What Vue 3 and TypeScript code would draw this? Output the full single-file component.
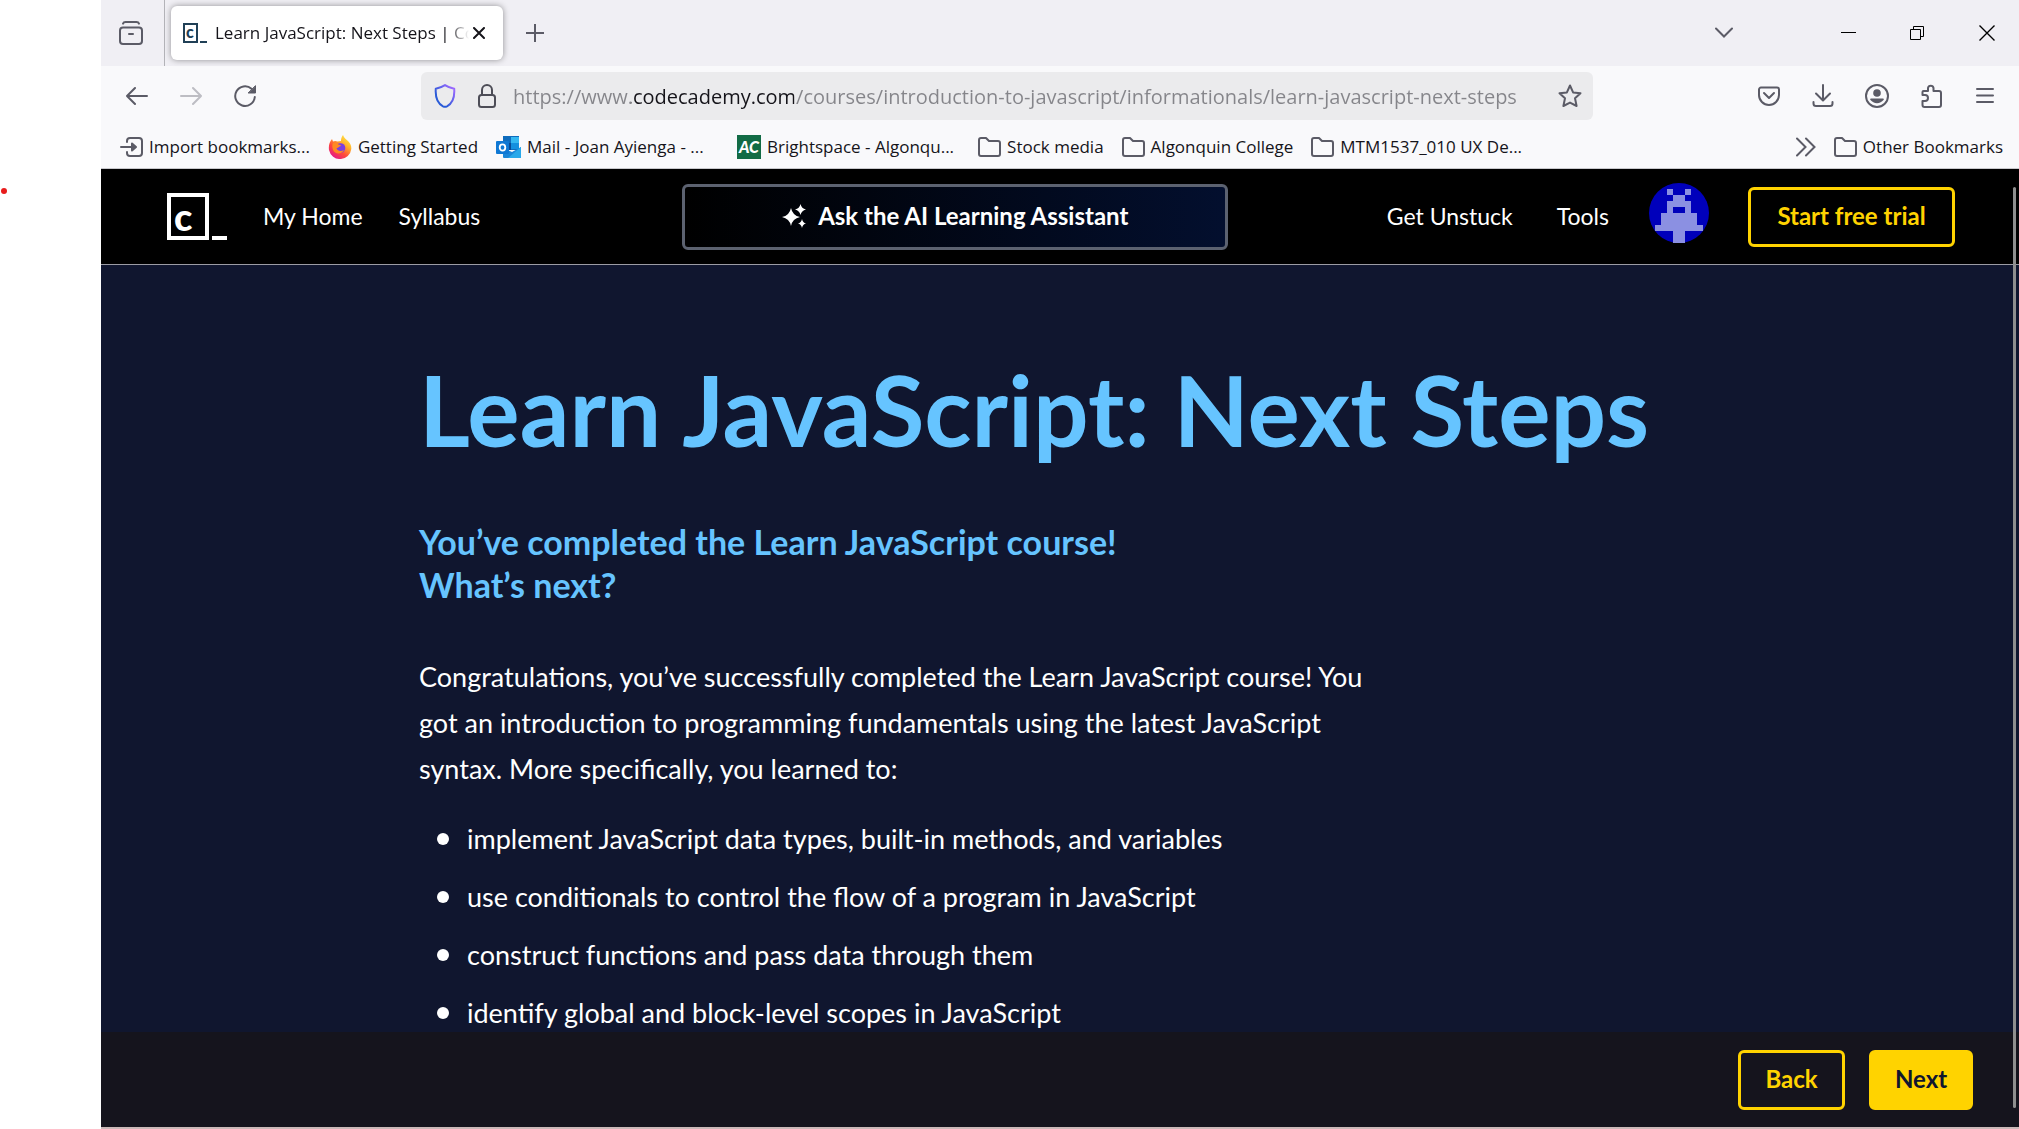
<script setup lang="ts">
import { ref } from 'vue'

interface Bookmark {
  label: string
  icon: 'import' | 'firefox' | 'outlook' | 'college' | 'folder'
  wide?: boolean
}

const address = ref('https://www.codecademy.com/courses/introduction-to-javascript/informationals/learn-javascript-next-steps')

const bookmarks: Bookmark[] = [
  { label: 'Import bookmarks...', icon: 'import' },
  { label: 'Getting Started', icon: 'firefox' },
  { label: 'Mail - Joan Ayienga - ...', icon: 'outlook', wide: true },
  { label: 'Brightspace - Algonqu...', icon: 'college', wide: true },
  { label: 'Stock media', icon: 'folder' },
  { label: 'Algonquin College', icon: 'folder' },
  { label: 'MTM1537_010 UX De...', icon: 'folder', wide: true },
]

const skills: string[] = [
  'implement JavaScript data types, built-in methods, and variables',
  'use conditionals to control the flow of a program in JavaScript',
  'construct functions and pass data through them',
  'identify global and block-level scopes in JavaScript',
]
</script>

<template>
  <div class="screen">
    <span class="marker"></span>
    <div class="browser">
      <div class="tabs">
        <button class="recent" aria-label="Recent browsing">
          <svg width="24" height="24" viewBox="0 0 24 24" fill="none" stroke="#5b5b66" stroke-width="2" stroke-linecap="round">
            <path d="M4 2.6C4.5 1.3 5.5 1 6.500 1h11c1 0 2 .3 2.500 1.600" />
            <rect x="1" y="6.500" width="22" height="16.500" rx="3" />
            <path d="M10 13h4" />
          </svg>
        </button>
        <div class="tab">
          <svg class="favicon" width="24" height="20" viewBox="0 0 24 20">
            <rect x="1" y="1" width="13" height="18" fill="none" stroke="#204056" stroke-width="2" />
            <rect x="17" y="18" width="7" height="2" fill="#204056" />
            <text x="3" y="15" font-family="Lato, sans-serif" font-weight="900" font-size="16" fill="#204056">c</text>
          </svg>
          <span class="tab-title">Learn JavaScript: Next Steps | Co</span>
          <button class="tab-close" aria-label="Close tab">
            <svg width="12" height="12" viewBox="0 0 12 12" stroke="#15141a" stroke-width="2" stroke-linecap="round"><path d="M1 1l10 10M11 1L1 11" /></svg>
          </button>
        </div>
        <button class="new-tab" aria-label="New tab">
          <svg width="18" height="18" viewBox="0 0 18 18" stroke="#5b5b66" stroke-width="2"><path d="M9 0v18M0 9h18" /></svg>
        </button>
        <div class="window-controls">
          <button class="all-tabs" aria-label="List all tabs">
            <svg width="18" height="12" viewBox="0 0 18 12" fill="none" stroke="#5b5b66" stroke-width="2" stroke-linecap="round"><path d="M1 1.500l8 8 8-8" /></svg>
          </button>
          <button aria-label="Minimize">
            <svg width="15" height="15" viewBox="0 0 15 15" fill="#000"><rect y="6" width="15" height="1" /></svg>
          </button>
          <button aria-label="Restore">
            <svg width="15" height="15" viewBox="0 0 15 15" fill="none" stroke="#000"><path d="M.5 3.500h10v10H.5zM3.500 3.500v-3h10v10h-3" /></svg>
          </button>
          <button aria-label="Close window">
            <svg width="16" height="16" viewBox="0 0 16 16" stroke="#000" stroke-width="1.400"><path d="M.5.5l15 15M15.500.5l-15 15" /></svg>
          </button>
        </div>
      </div>

      <div class="toolbar">
        <div class="nav-buttons">
          <button aria-label="Back">
            <svg width="22" height="22" viewBox="0 0 22 22" fill="none" stroke="#5b5b66" stroke-width="2" stroke-linecap="round" stroke-linejoin="round"><path d="M21 11H1M9 3l-8 8 8 8" /></svg>
          </button>
          <button aria-label="Forward" disabled>
            <svg width="22" height="22" viewBox="0 0 22 22" fill="none" stroke="#bdbdc3" stroke-width="2" stroke-linecap="round" stroke-linejoin="round"><path d="M1 11h20M13 3l8 8-8 8" /></svg>
          </button>
          <button aria-label="Reload">
            <svg width="22" height="22" viewBox="0 0 22 22" fill="none" stroke="#5b5b66" stroke-width="2" stroke-linecap="round"><path d="M20.800 12A9.800 9.800 0 1 1 17.500 3.700" /><path d="M21.500 1v7h-7z" fill="#5b5b66" stroke-width="1" stroke-linejoin="round" /></svg>
          </button>
        </div>
        <div class="url-bar">
          <svg width="22" height="24" viewBox="0 0 22 24" fill="none">
            <defs><linearGradient id="shield" x1="0" y1="1" x2="1" y2="0"><stop offset=".3" stop-color="#2a5bd7" /><stop offset=".9" stop-color="#9a68ff" /></linearGradient></defs>
            <path d="M11 1.200c2.500 1.600 5.500 2.900 9.200 3.600.6 8-1.900 14.700-7.200 17.500-1.400.7-2.600.7-4 0C3.700 19.500 1.200 12.800 1.800 4.800 5.500 4.100 8.500 2.800 11 1.200z" stroke="url(#shield)" stroke-width="2" />
          </svg>
          <svg width="18" height="24" viewBox="0 0 18 24" fill="none" stroke="#4d4d57" stroke-width="2"><rect x="1" y="11" width="16" height="12" rx="2.500" /><path d="M4 11V6a5 5 0 0 1 10 0v5" /></svg>
          <input v-model="address" class="address" type="text" aria-label="Address" spellcheck="false" />
          <button aria-label="Bookmark this page">
            <svg width="24" height="24" viewBox="0 0 24 24" fill="none" stroke="#5b5b66" stroke-width="2" stroke-linejoin="round"><path d="M12 1.500l3.100 6.900 7.400.8-5.500 5 1.600 7.800L12 18.600 5.400 22 7 14.200 1.500 9.200l7.400-.8z" /></svg>
          </button>
        </div>
        <div class="tool-buttons">
          <button aria-label="Save to Pocket">
            <svg width="24" height="24" viewBox="0 0 24 24" fill="none" stroke="#5b5b66" stroke-width="2" stroke-linecap="round" stroke-linejoin="round"><path d="M4 3.500h16a2 2 0 0 1 2 2V11a10 10 0 0 1-20 0V5.500a2 2 0 0 1 2-2z" /><path d="M7 9l5 5 5-5" /></svg>
          </button>
          <button aria-label="Downloads">
            <svg width="24" height="24" viewBox="0 0 24 24" fill="none" stroke="#5b5b66" stroke-width="2" stroke-linecap="round" stroke-linejoin="round"><path d="M12 1v15M5 9.500l7 7 7-7M2.500 18v1.500A2.500 2.500 0 0 0 5 22h14a2.500 2.500 0 0 0 2.500-2.500V18" /></svg>
          </button>
          <button aria-label="Account">
            <svg width="24" height="24" viewBox="0 0 24 24"><circle cx="12" cy="12" r="11" fill="none" stroke="#5b5b66" stroke-width="2" /><circle cx="12" cy="9" r="3.800" fill="#5b5b66" /><path d="M6 14.500h12c1 0 1 1 .5 1.600a8.300 8.300 0 0 1-13 0c-.5-.6-.5-1.600.5-1.600z" fill="#5b5b66" /></svg>
          </button>
          <button aria-label="Extensions">
            <svg width="24" height="24" viewBox="0 0 24 24" fill="none" stroke="#5b5b66" stroke-width="2" stroke-linejoin="round"><path d="M4.500 7H9V4a2.800 2.800 0 0 1 5.500 0v3H20a2 2 0 0 1 2 2v12a2 2 0 0 1-2 2H5.500a2 2 0 0 1-2-2v-4H6a3 3 0 0 0 0-6H3.500V8a1 1 0 0 1 1-1z" /></svg>
          </button>
          <button aria-label="Menu">
            <svg width="24" height="24" viewBox="0 0 24 24" stroke="#5b5b66" stroke-width="2" stroke-linecap="round"><path d="M4 5h16M4 11.500h16M4 18h16" /></svg>
          </button>
        </div>
      </div>

      <div class="bookmarks">
        <a v-for="item in bookmarks" :key="item.label" class="bookmark" :class="{ wide: item.wide }" href="#">
          <svg v-if="item.icon === 'import'" width="23" height="20" viewBox="0 0 23 20" fill="none" stroke="#5b5b66" stroke-width="2" stroke-linecap="round" stroke-linejoin="round">
            <path d="M7 5V4a3 3 0 0 1 3-3h9a3 3 0 0 1 3 3v12a3 3 0 0 1-3 3h-9a3 3 0 0 1-3-3v-1" /><path d="M1 10h13" /><path d="M12 6.500l4 3.500-4 3.500z" fill="#5b5b66" />
          </svg>
          <svg v-else-if="item.icon === 'firefox'" width="24" height="24" viewBox="0 0 24 24">
            <defs><linearGradient id="flame" x1=".9" y1="0" x2=".2" y2="1"><stop offset="0" stop-color="#fff44f" /><stop offset=".35" stop-color="#ffb12b" /><stop offset=".65" stop-color="#ff4a3a" /><stop offset="1" stop-color="#e01490" /></linearGradient></defs>
            <path d="M15 0c1 3 3 4 5 6 2.500 2.500 3.500 5 3.300 8A11.300 11.300 0 0 1 1 15C.4 10.500 1.500 7 4 4l1 2.600c1.500-.8 3-.8 4.500 0L13 6c0-2 .5-4 2-6z" fill="url(#flame)" />
            <circle cx="12.500" cy="13" r="4.800" fill="#7a3fe0" />
            <path d="M5 8c2-1 4-.6 5.500 1.500 1.500.3 2.500.8 2.500 1.500-1.500 0-2.500 2-4.500 2.200 1 3 5 3.500 7.500 1.500-2 5-9 5-11 0C4.200 12.500 4 10 5 8z" fill="#ff8a22" />
          </svg>
          <svg v-else-if="item.icon === 'outlook'" width="25" height="22" viewBox="0 0 25 22">
            <rect x="7" y="0" width="16" height="14" fill="#0f6cbd" /><rect x="15" y="1" width="8" height="6" fill="#35b8f1" /><rect x="7" y="7" width="8" height="7" fill="#0a4a94" /><rect x="15" y="7" width="8" height="6" fill="#1490df" />
            <path d="M7 12l9 4 9-5v11H8a1 1 0 0 1-1-1z" fill="#1a86d8" /><path d="M25 11v11H12z" fill="#28a8ea" />
            <rect x="0" y="5" width="13" height="13" rx="1" fill="#0f78d4" /><ellipse cx="6.500" cy="11.500" rx="2.800" ry="3.200" fill="none" stroke="#fff" stroke-width="1.800" />
          </svg>
          <svg v-else-if="item.icon === 'college'" width="24" height="24" viewBox="0 0 24 24">
            <rect width="24" height="24" fill="#126b45" />
            <text x="12" y="18" text-anchor="middle" font-family="Lato, sans-serif" font-weight="900" font-style="italic" font-size="16" fill="#fff">AC</text>
          </svg>
          <svg v-else width="23" height="20" viewBox="0 0 23 20" fill="none" stroke="#5b5b66" stroke-width="2" stroke-linejoin="round"><path d="M1 17V3a2 2 0 0 1 2-2h5l3 3h9a2 2 0 0 1 2 2v11a2 2 0 0 1-2 2H3a2 2 0 0 1-2-2z" /></svg>
          <span>{{ item.label }}</span>
        </a>
        <button class="overflow" aria-label="More bookmarks">
          <svg width="20" height="20" viewBox="0 0 20 20" fill="none" stroke="#5b5b66" stroke-width="2" stroke-linecap="round"><path d="M1 1.500L9.500 10 1 18.500M10 1.500l8.500 8.500-8.500 8.500" /></svg>
        </button>
        <a class="bookmark" href="#">
          <svg width="23" height="20" viewBox="0 0 23 20" fill="none" stroke="#5b5b66" stroke-width="2" stroke-linejoin="round"><path d="M1 17V3a2 2 0 0 1 2-2h5l3 3h9a2 2 0 0 1 2 2v11a2 2 0 0 1-2 2H3a2 2 0 0 1-2-2z" /></svg>
          <span>Other Bookmarks</span>
        </a>
      </div>

      <div class="page">
        <header class="site-header">
          <a class="logo" href="#" aria-label="Codecademy">
            <svg width="60" height="48" viewBox="0 0 60 48">
              <rect x="2" y="2" width="38" height="43" fill="none" stroke="#fff" stroke-width="4" />
              <rect x="45" y="43" width="15" height="4" fill="#fff" />
              <text x="7" y="38" font-family="Lato, sans-serif" font-weight="900" font-size="38" fill="#fff">c</text>
            </svg>
          </a>
          <nav class="main-nav">
            <a href="#">My Home</a>
            <a href="#">Syllabus</a>
          </nav>
          <button class="assistant">
            <svg width="24" height="24" viewBox="0 0 24 24" fill="#fff">
              <path d="M9 4q1.500 7.500 9 9-7.500 1.500-9 9-1.500-7.500-9-9 7.500-1.500 9-9z" /><path d="M18.500 0q1 4.500 5.500 5.500-4.500 1-5.500 5.500-1-4.500-5.500-5.500 4.500-1 5.500-5.500z" /><path d="M20 15q.8 3.700 4 4.500-3.200.8-4 4.500-.8-3.700-4-4.500 3.200-.8 4-4.500z" />
            </svg>
            <span>Ask the AI Learning Assistant</span>
          </button>
          <nav class="side-nav">
            <a href="#">Get Unstuck</a>
            <a href="#">Tools</a>
          </nav>
          <button class="avatar" aria-label="Profile">
            <svg width="60" height="60" viewBox="0 0 10 10">
              <circle cx="5" cy="5" r="5" fill="#0000bb" />
              <path shape-rendering="crispEdges" fill="#8b90e2" d="M3 1h1v1H3zM6 1h1v1H6zM4 2h2v1H4zM3 3h4v2h1v2h1v1H6v2H4V8H1V7h1V5h1zM4 4v1h2V4z" fill-rule="evenodd" />
            </svg>
          </button>
          <button class="trial">Start free trial</button>
        </header>

        <main class="lesson">
          <h1>Learn JavaScript: Next Steps</h1>
          <h2>You’ve completed the Learn JavaScript course!<br />What’s next?</h2>
          <p>
            Congratulations, you’ve successfully completed the Learn JavaScript course! You<br />
            got an introduction to programming fundamentals using the latest JavaScript<br />
            syntax. More specifically, you learned to:
          </p>
          <ul>
            <li v-for="skill in skills" :key="skill">{{ skill }}</li>
          </ul>
        </main>

        <footer class="lesson-nav">
          <button class="back">Back</button>
          <button class="next">Next</button>
        </footer>
        <span class="scrollbar"></span>
      </div>
    </div>
  </div>
</template>

<style>
body {
  margin: 0;
  background: #fff;
}
</style>

<style scoped>
* {
  box-sizing: border-box;
}

.screen {
  position: relative;
  display: flex;
  min-height: 100vh;
  padding-left: 101px;
  font-family: 'Open Sans', 'Noto Sans', sans-serif;
  overflow: hidden;
}

.marker {
  position: absolute;
  left: 1px;
  top: 188px;
  width: 6px;
  height: 6px;
  border-radius: 50%;
  background: #e81c1c;
}

.browser {
  flex: 1;
  min-width: 0;
  display: flex;
  flex-direction: column;
  background: #f9f9fb;
  border-bottom: 2px solid #cbb9b9;
}

button {
  display: flex;
  align-items: center;
  justify-content: center;
  padding: 0;
  border: 0;
  background: none;
  font: inherit;
  cursor: pointer;
}

svg {
  display: block;
  flex: none;
}

a {
  color: inherit;
  text-decoration: none;
}

.tabs {
  display: flex;
  align-items: center;
  height: 66px;
  background: #f0eff4;
}

.recent {
  width: 64px;
  height: 66px;
  padding-right: 4px;
  border-right: 1px solid #b3b3b8;
}

.tab {
  display: flex;
  align-items: center;
  width: 332px;
  height: 54px;
  margin-left: 6px;
  padding: 0 18px 0 12px;
  border-radius: 6px;
  background: #fff;
  box-shadow: 0 0 6px rgba(0, 0, 0, 0.4);
}

.tab-title {
  flex: 1;
  min-width: 0;
  margin-left: 8px;
  white-space: nowrap;
  font-size: 17px;
  line-height: 24px;
  color: #15141a;
  mask-image: linear-gradient(to left, transparent 4px, #000 26px);
}

.new-tab {
  margin-left: 23px;
}

.window-controls {
  display: flex;
  align-items: center;
  gap: 54px;
  margin-left: auto;
  padding-right: 24px;
}

.all-tabs {
  margin-right: 54px;
}

.toolbar {
  display: flex;
  align-items: center;
  height: 60px;
}

.nav-buttons {
  display: flex;
  gap: 32px;
  padding-left: 25px;
}

.url-bar {
  flex: 1;
  min-width: 0;
  display: flex;
  align-items: center;
  height: 48px;
  margin: 0 164px 0 165px;
  padding: 0 11px 0 13px;
  border-radius: 6px;
  background: #ebebed;
}

.url-bar svg + svg {
  margin-left: 22px;
}

.address {
  flex: 1;
  min-width: 0;
  height: 40px;
  margin-left: 17px;
  padding: 0;
  border: 0;
  outline: 0;
  font-family: inherit;
  font-size: 20px;
  color: transparent;
  background: linear-gradient(to right, #85858a 118px, #15141a 118px, #15141a 281px, #85858a 281px);
  background-clip: text;
}

.tool-buttons {
  display: flex;
  gap: 30px;
  padding-right: 22px;
}

.bookmarks {
  display: flex;
  align-items: center;
  gap: 18px;
  height: 42px;
  padding: 0 16px 0 19px;
  font-size: 17px;
  line-height: 24px;
  color: #15141a;
}

.bookmark {
  display: flex;
  align-items: center;
  gap: 6px;
  white-space: nowrap;
}

.bookmark.wide {
  width: 223px;
}

.overflow {
  margin-left: auto;
}

.page {
  position: relative;
  flex: 1;
  display: flex;
  flex-direction: column;
  border-top: 1px solid #c8c8cc;
  background: #10162f;
  font-family: Lato, 'Open Sans', sans-serif;
  color: #fff;
}

.site-header {
  display: flex;
  align-items: center;
  height: 96px;
  padding: 0 64px 0 66px;
  border-bottom: 1px solid #9c9ca4;
  background: #000;
  font-size: 23px;
  line-height: 32px;
  white-space: nowrap;
}

.main-nav,
.side-nav {
  display: flex;
  padding-bottom: 2px;
}

.main-nav {
  gap: 36px;
  margin-left: 36px;
}

.assistant {
  flex: 0 1 546px;
  gap: 12px;
  height: 66px;
  margin: 0 auto 0 202px;
  padding-bottom: 2px;
  border: 3px solid #5c6270;
  border-radius: 6px;
  background: linear-gradient(to right, #000, #030f2e);
  color: #fff;
  font-size: 24px;
  font-weight: 700;
}

.side-nav {
  gap: 44px;
}

.avatar {
  margin: 0 39px 7px 40px;
}

.trial,
.back,
.next {
  height: 60px;
  padding-bottom: 2px;
  border: 3px solid #ffd300;
  border-radius: 6px;
  color: #ffd300;
  font-size: 24px;
  font-weight: 700;
}

.trial {
  width: 207px;
}

.lesson {
  flex: 1;
  padding: 92px 100px 0 318px;
}

h1 {
  margin: 0;
  font-size: 98px;
  line-height: 104px;
  font-weight: 700;
  color: #66c4ff;
}

h2 {
  margin: 59px 0 0;
  font-size: 34px;
  line-height: 43px;
  font-weight: 700;
  color: #66c4ff;
}

p {
  margin: 48px 0 0;
  font-size: 27px;
  line-height: 46px;
}

ul {
  display: flex;
  flex-direction: column;
  gap: 20px;
  margin: 28px 0 0;
  padding: 0;
  list-style: none;
}

li {
  display: flex;
  align-items: center;
  gap: 18px;
  padding-left: 18px;
  font-size: 27px;
  line-height: 38px;
}

li::before {
  content: '';
  width: 12px;
  height: 12px;
  border-radius: 50%;
  background: #fff;
}

.lesson-nav {
  display: flex;
  align-items: center;
  justify-content: flex-end;
  gap: 24px;
  height: 95px;
  padding-right: 46px;
  background: #15141d;
  line-height: 32px;
}

.back {
  width: 107px;
}

.next {
  width: 104px;
  background: #ffd300;
  color: #10162f;
}

.scrollbar {
  position: absolute;
  top: 18px;
  right: 3px;
  bottom: 19px;
  width: 3px;
  border-radius: 2px;
  background: #8f8f8f;
}
</style>
